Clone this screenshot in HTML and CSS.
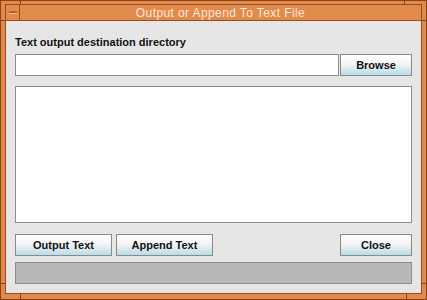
FILE: index.html
```html
<!DOCTYPE html>
<html lang="en">
<head>
  <meta charset="UTF-8" />
  <title>Output or Append To Text File</title>
  <link rel="stylesheet" href="styles.css">
</head>
<body>
  <div class="window">
    <!-- resize handle marks on the frame -->
    <span class="notch v top-left"></span>
    <span class="notch v top-right"></span>
    <span class="notch v bottom-left"></span>
    <span class="notch v bottom-right"></span>
    <span class="notch h left-top"></span>
    <span class="notch h right-top"></span>
    <span class="notch h left-bottom"></span>
    <span class="notch h right-bottom"></span>

    <div class="inner">
      <!-- Title bar -->
      <div class="titlebar">
        <span class="menu-btn"><span class="dash"></span></span>
        <span class="title">Output or Append To Text File</span>
      </div>

      <!-- Dialog body -->
      <div class="content">
        <label class="caption" for="dir">Text output destination directory</label>
        <div class="dir-row">
          <input type="text" id="dir" class="field">
          <button class="btn browse">Browse</button>
        </div>

        <div class="output-area"></div>

        <div class="button-row">
          <button class="btn wide">Output Text</button>
          <button class="btn wide">Append Text</button>
          <span class="spacer"></span>
          <button class="btn close">Close</button>
        </div>

        <div class="status"></div>
      </div>
    </div>
  </div>
</body>
</html>
```

FILE: styles.css
```css
body {
  margin: 0;
  background: #e6e6e6;
  font-family: "Liberation Sans", Arial, sans-serif;
}

/* Window frame */
.window {
  position: relative;
  width: 427px;
  height: 300px;
  box-sizing: border-box;
  background: #e2894c;
  border: 1px solid #8a4216;
  padding: 3px 4px 5px 4px;
}

.notch {
  position: absolute;
  background: #8a4216;
}

.notch.v { width: 1px; }
.notch.h { height: 1px; }

.top-left { left: 19px; top: 0; height: 3px; }
.top-right { left: 403px; top: 0; height: 3px; }
.bottom-left { left: 19px; bottom: 0; height: 5px; }
.bottom-right { left: 405px; bottom: 0; height: 5px; }
.left-top { left: 0; top: 19px; width: 4px; }
.right-top { right: 0; top: 19px; width: 4px; }
.left-bottom { left: 0; top: 282px; width: 4px; }
.right-bottom { right: 0; top: 282px; width: 4px; }

.inner {
  height: 100%;
  box-sizing: border-box;
  border: 1px solid #9a4c1c;
  display: flex;
  flex-direction: column;
}

/* Title bar */
.titlebar {
  height: 15px;
  display: flex;
  align-items: center;
  background: #e2894c;
  border-bottom: 1px solid #9a4c1c;
}

.menu-btn {
  width: 14px;
  height: 15px;
  box-sizing: border-box;
  border-right: 1px solid #9a4c1c;
  display: flex;
  align-items: center;
  justify-content: center;
}

.dash {
  width: 8px;
  height: 2px;
  background: #b8612a;
  border-bottom: 1px solid #f3b98c;
}

.title {
  flex: 1;
  text-align: center;
  color: #fbeadb;
  font-size: 12px;
  letter-spacing: 0.4px;
}

/* Dialog body */
.content {
  flex: 1;
  background: #e6e6e6;
  padding: 14px 9px 9px 9px;
  display: flex;
  flex-direction: column;
}

.caption {
  display: block;
  font-size: 11px;
  font-weight: bold;
  color: #111;
  line-height: 14px;
  margin-bottom: 5px;
}

.dir-row {
  display: flex;
  gap: 1px;
}

.field {
  width: 324px;
  height: 22px;
  box-sizing: border-box;
  margin: 0;
  border: 1px solid #8c8c8c;
  background: #fff;
}

.btn {
  height: 22px;
  box-sizing: border-box;
  margin: 0;
  padding: 0;
  border: 1px solid #8a8a8a;
  background: linear-gradient(#ffffff 0%, #f4f4f4 45%, #cde6ee 78%, #b9dde8 100%);
  font-family: "Liberation Sans", Arial, sans-serif;
  font-size: 11px;
  font-weight: bold;
  color: #111;
}

.browse, .close {
  width: 72px;
}

.wide {
  width: 97px;
}

.output-area {
  height: 137px;
  margin-top: 10px;
  box-sizing: border-box;
  border: 1px solid #8c8c8c;
  background: #fff;
}

.button-row {
  display: flex;
  gap: 4px;
  margin-top: 11px;
}

.spacer {
  flex: 1;
}

.status {
  height: 22px;
  margin-top: 6px;
  box-sizing: border-box;
  border: 1px solid #8c8c8c;
  background: #b8b8b8;
}
```
